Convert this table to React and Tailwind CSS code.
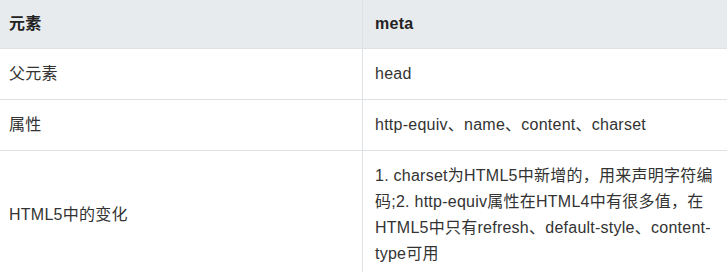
export default function App() {
  const rows = [
    { name: "父元素", value: "head" },
    { name: "属性", value: "http-equiv、name、content、charset" },
    {
      name: "HTML5中的变化",
      value:
        "1. charset为HTML5中新增的，用来声明字符编码;2. http-equiv属性在HTML4中有很多值，在HTML5中只有refresh、default-style、content-type可用",
    },
  ];

  return (
    <div
      className="w-[727px] h-[272px] overflow-hidden bg-white"
      style={{ fontFamily: '"Liberation Sans", "Noto Sans CJK SC", sans-serif' }}
    >
      <table className="-ml-1 -mt-px w-[731px] table-fixed border-collapse text-[16px] leading-[26px] tracking-[0.25px] text-[#333]">
        <colgroup>
          <col className="w-[366px]" />
          <col className="w-[365px]" />
        </colgroup>
        <thead>
          <tr className="bg-[#e8ebee]">
            <th className="border border-[#dfe2e5] px-3 py-[11px] text-left font-bold text-[#222]">
              元素
            </th>
            <th className="border border-[#dfe2e5] px-3 py-[11px] text-left font-bold text-[#222]">
              meta
            </th>
          </tr>
        </thead>
        <tbody>
          {rows.map((row) => (
            <tr key={row.name}>
              <td className="border border-[#dfe2e5] px-3 py-3 align-middle">
                {row.name}
              </td>
              <td className="border border-[#dfe2e5] px-3 py-3 align-middle">
                {row.value}
              </td>
            </tr>
          ))}
        </tbody>
      </table>
    </div>
  );
}
